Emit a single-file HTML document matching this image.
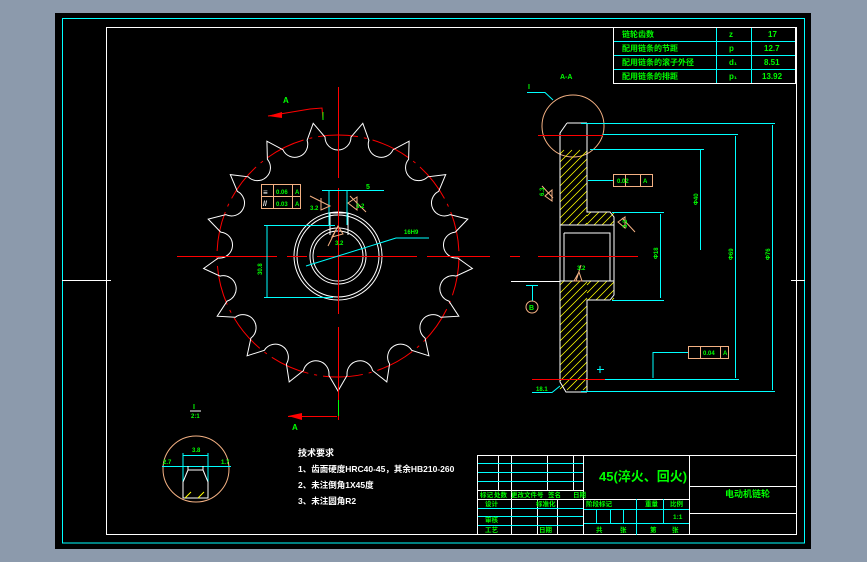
<!DOCTYPE html><html><head><meta charset="utf-8"><style>
html,body{margin:0;padding:0;background:#8c9aac;width:867px;height:562px;overflow:hidden}
svg{position:absolute;left:0;top:0}
text{font-family:"Liberation Sans","Noto Sans CJK SC",sans-serif;fill:#00ff00;font-weight:bold}
.w{fill:#fff}
</style></head><body>
<svg width="867" height="562" viewBox="0 0 867 562">
<rect x="55" y="13" width="756" height="536" fill="#000"/>
<rect x="62.5" y="18.5" width="742" height="524.5" fill="none" stroke="#00ffff" stroke-width="1"/>
<rect x="106.5" y="27.5" width="690" height="507" fill="none" stroke="#fff" stroke-width="1"/>
<line x1="62" y1="280.5" x2="111" y2="280.5" stroke="#fff"/>
<line x1="791" y1="280.5" x2="805" y2="280.5" stroke="#fff"/>

<g id="front">
<circle cx="338" cy="256" r="121" fill="none" stroke="#f00" stroke-width="1" stroke-dasharray="40,6,3,6"/>
<path id="sp" fill="none" stroke="#fff" stroke-width="1"/>
<g fill="none" stroke="#fff" stroke-width="1">
<circle cx="338" cy="256" r="44"/><circle cx="338" cy="256" r="41"/>
<circle cx="338" cy="256" r="28"/><circle cx="338" cy="256" r="25"/>
<path d="M330 235 V213 H348 V235"/>
</g>
<path d="M177 256.5 H277 M287 256.5 H307 M317 256.5 H417 M427 256.5 H490 M338.5 87 V178 M338.5 188 V314 M338.5 327 V420" stroke="#f00" fill="none"/>
<line x1="338.5" y1="400" x2="338.5" y2="416" stroke="#0f0"/>
<g stroke="#0ff" fill="none">
<path d="M264 225.5 H335 M264 297.5 H333 M267 226 V297 M329 190 V225 M347 190 V225 M322 190.5 H384 M306 266 L396 238 H429"/>
</g>
<g stroke="#f4b183" fill="none">
<rect x="261.5" y="184.5" width="39" height="24"/><path d="M261 196.5 H300 M273.5 184 V208 M292.5 184 V208"/>
<path d="M310 196 L330 206 L321 210 V198 M350 196 L366 212 M348 203 L357 197 V210 Z M332 237 L338 226 L343 234 Z M328 246 L338 226"/>
</g>
<text x="276" y="194" font-size="6">0.06</text><text x="276" y="206" font-size="6">0.03</text>
<text x="295" y="194" font-size="6">A</text><text x="295" y="206" font-size="6">A</text>
<text x="263" y="195" font-size="8" class="w">≡</text><text x="263" y="206" font-size="7" class="w">//</text>
<text x="366" y="189" font-size="7">5</text>
<text x="310" y="210" font-size="6">3.2</text><text x="356" y="208" font-size="6">3.2</text>
<text x="335" y="245" font-size="6">3.2</text>
<text x="404" y="234" font-size="6">16H9</text>
<text x="262" y="275" font-size="6" transform="rotate(-90 262 275)">30.8</text>
<path d="M268 116 L310 109 L322 108 L323 120" stroke="#f00" fill="none"/><path d="M323 112 L323 120" stroke="#0f0"/>
<path d="M268 116 L282 112 L282 118 Z" fill="#f00"/>
<text x="283" y="103" font-size="8">A</text>
<path d="M288 416.5 H337" stroke="#f00"/><path d="M288 416 L302 413 L302 420 Z" fill="#f00"/>
<text x="292" y="430" font-size="8">A</text>
<text x="193" y="409" font-size="7">I</text><line x1="190" y1="411" x2="201" y2="411" stroke="#fff"/><text x="191" y="418" font-size="6">2:1</text>
</g>

<g>
<circle cx="196" cy="469" r="33" fill="none" stroke="#f4b183"/>
<path d="M162 466.5 H231 M183 453 V482 M208 453 V482 M183 455.5 H208" stroke="#0ff" fill="none"/>
<path d="M188 466 V470 H203 V466 M188 470 L183 482 V498 H208 V482 L203 470" stroke="#fff" fill="none"/>
<path d="M185 498 L191 492 M198 498 L204 492" stroke="#ff0"/>
<text x="192" y="452" font-size="6">3.8</text><text x="163" y="464" font-size="6">2.7</text><text x="221" y="464" font-size="6">1.7</text>
</g>

<g class="w" font-size="8.5">
<text x="298" y="456" class="w" font-size="9">技术要求</text>
<text x="298" y="472" class="w">1、齿面硬度HRC40-45，其余HB210-260</text>
<text x="298" y="488" class="w">2、未注倒角1X45度</text>
<text x="298" y="504" class="w">3、未注圆角R2</text>
</g>

<g>
<circle cx="573" cy="126" r="31" fill="none" stroke="#f4b183"/>
<path id="hatch" stroke="#ff0" stroke-width="0.8" fill="none"/>
<g stroke="#fff" fill="none">
<path d="M567 123 H587 M567 123 L560 133 V382 L566 392 H587 M587 123 V212 H610 L614 217 V295 L610 300 H587 V392 M560 225 H614 M560 281 H614 M564 233 H610 V281 M564 233 V281"/>
<path d="M511 281.5 H560"/>
</g>
<path d="M510 256.5 H520 M538 256.5 H638 M538 135.5 H603 M532 379.5 H605" stroke="#f00" fill="none"/>
<g stroke="#0ff" fill="none">
<path d="M581 123.5 H775 M603 134.5 H738 M590 149.5 H704 M612 212.5 H664 M612 300.5 H664 M605 379.5 H739 M581 391.5 H775 M772.5 125 V390 M735.5 136 V378 M660.5 214 V298 M700.5 150 V250 M588 180.5 H614 M653 352.5 H688 M653 352 V378 M527 92.5 H545 L553 100 M526 285.5 H538 M532.5 285 V301 M532 392.5 H552 L560 386"/>
</g>
<g stroke="#f4b183" fill="none">
<rect x="613.5" y="174.5" width="39" height="12"/><path d="M625.5 174 V187 M640.5 174 V187"/>
<rect x="688.5" y="346.5" width="40" height="12"/><path d="M700.5 346 V359 M720.5 346 V359"/>
<circle cx="532" cy="307" r="6"/>
<path d="M542 186 L553 198 M552 190 L552 201 L545 196 Z M622 218 L635 232 M618 222 L625 217 V228 Z M579 272 L574 281 L582 281 Z M581 265 L576 281"/>
</g>
<path d="M600 366 V373 M597 369.5 H604" stroke="#0ff"/>
<text x="617" y="183" font-size="6">0.02</text><text x="703" y="355" font-size="6">0.04</text>
<text x="643" y="183" font-size="6">A</text><text x="723" y="355" font-size="6">A</text>
<text x="528" y="89" font-size="7">I</text><text x="560" y="79" font-size="7">A-A</text>
<text x="529" y="310" font-size="7">B</text><text x="536" y="391" font-size="6">18.1</text>
<text x="544" y="196" font-size="6" transform="rotate(-90 544 196)">6.3</text>
<text x="627" y="228" font-size="6" transform="rotate(-90 627 228)">3.2</text>
<text x="577" y="270" font-size="6">3.2</text>
<text x="698" y="205" font-size="6" transform="rotate(-90 698 205)">Φ40</text>
<text x="658" y="259" font-size="6" transform="rotate(-90 658 259)">Φ18</text>
<text x="733" y="260" font-size="6" transform="rotate(-90 733 260)">Φ69</text>
<text x="770" y="260" font-size="6" transform="rotate(-90 770 260)">Φ76</text>
</g>

<g>
<rect x="613.5" y="27.5" width="182" height="56" fill="none" stroke="#fff"/>
<path d="M614 41.5 H795 M614 55.5 H795 M614 69.5 H795 M716.5 28 V83 M751.5 28 V83" stroke="#0ff"/>
<g font-size="8">
<text x="622" y="37">链轮齿数</text><text x="622" y="51">配用链条的节距</text><text x="622" y="65">配用链条的滚子外径</text><text x="622" y="79">配用链条的排距</text>
<text x="729" y="37">z</text><text x="729" y="51">p</text><text x="729" y="65">d₁</text><text x="729" y="79">p₁</text>
<text x="768" y="37">17</text><text x="764" y="51">12.7</text><text x="764" y="65">8.51</text><text x="762" y="79">13.92</text>
</g>
</g>

<g fill="none">
<rect x="477.5" y="455.5" width="319" height="79" stroke="#fff"/>
<path d="M583.5 455 V535 M689.5 455 V535 M689 486.5 H797 M689 513.5 H797 M477 490.5 H583 M477 499.5 H689 M498.5 455 V490 M511.5 455 V535 M547.5 455 V490 M573.5 455 V490 M537.5 499 V535 M557.5 499 V535" stroke="#fff"/>
<path d="M478 463.5 H583 M478 472.5 H583 M478 481.5 H583 M478 508.5 H583 M478 516.5 H583 M478 525.5 H583 M584 509.5 H689 M584 523.5 H689 M596.5 509 V523 M610.5 509 V523 M623.5 509 V523 M636.5 499 V535 M663.5 499 V523" stroke="#0ff"/>
</g>
<g font-size="6.5">
<text x="480" y="497">标记</text><text x="494" y="497">处数</text><text x="511" y="497">更改文件号</text><text x="548" y="497">签名</text><text x="573" y="497">日期</text>
<text x="485" y="506">设计</text><text x="536" y="506">标准化</text>
<text x="586" y="506">阶段标记</text><text x="645" y="506">重量</text><text x="670" y="506">比例</text>
<text x="673" y="519">1:1</text>
<text x="485" y="522">审核</text><text x="485" y="532">工艺</text><text x="539" y="532">日期</text>
<text x="596" y="532">共</text><text x="620" y="532">张</text><text x="650" y="532">第</text><text x="672" y="532">张</text>
</g>
<text x="599" y="481" font-size="13">45(淬火、回火)</text>
<text x="725" y="497" font-size="9">电动机链轮</text>
</svg>
<script>
(function(){
var cx=338,cy=256,N=17,d="",rt=135,rc=119,sr=13;
for(var k=0;k<N;k++){
 var a=Math.PI/2+k*2*Math.PI/N, a2=a+Math.PI/N, a3=a+2*Math.PI/N;
 var tx=cx+rt*Math.cos(a),ty=cy+rt*Math.sin(a);
 var ccx=cx+rc*Math.cos(a2),ccy=cy+rc*Math.sin(a2);
 var tgx=-Math.sin(a2),tgy=Math.cos(a2);
 var p1x=ccx-sr*tgx,p1y=ccy-sr*tgy,p2x=ccx+sr*tgx,p2y=ccy+sr*tgy;
 if(k==0)d+="M"+tx.toFixed(1)+" "+ty.toFixed(1);
 d+=" L"+p1x.toFixed(1)+" "+p1y.toFixed(1)+" A"+sr+" "+sr+" 0 0 0 "+p2x.toFixed(1)+" "+p2y.toFixed(1);
 var nx=cx+rt*Math.cos(a3),ny=cy+rt*Math.sin(a3);
 d+=" L"+nx.toFixed(1)+" "+ny.toFixed(1);
}
document.getElementById("sp").setAttribute("d",d+"Z");
var h="";
function hat(x0,x1,y0,y1){for(var y=y0+4;y<y1+ (x1-x0);y+=8){var sx=x0,sy=y,ex=x0+(y-y0),ey=y0;if(sy>y1){sx=x0+(sy-y1);sy=y1;}if(ex>x1){ey=y0+(ex-x1);ex=x1;}if(sx<x1)h+="M"+sx+" "+sy+" L"+ex+" "+ey+" ";}}
hat(560,587,150,225);hat(587,614,212,225);hat(560,587,281,390);hat(587,614,281,300);
document.getElementById("hatch").setAttribute("d",h);
})();
</script>
</body></html>
